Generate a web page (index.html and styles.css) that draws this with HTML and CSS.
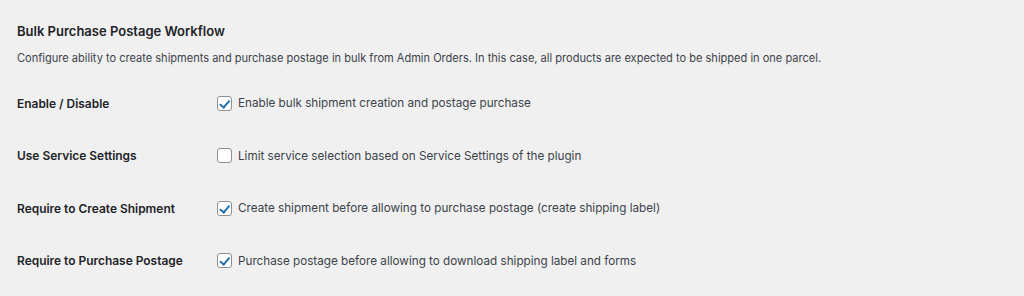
FILE: index.html
```html
<!DOCTYPE html>
<html lang="en">
<head>
    <meta charset="UTF-8">
    <title>Bulk Purchase Postage Workflow</title>
    <link rel="stylesheet" href="styles.css">
</head>
<body>
    <div class="wrap">
        <h2>Bulk Purchase Postage Workflow</h2>
        <p class="description">Configure ability to create shipments and purchase postage in bulk from Admin Orders. In this case, all products are expected to be shipped in one parcel.</p>

        <div class="form-table">
            <div class="row">
                <div class="label">Enable / Disable</div>
                <label class="field"><span class="check on"></span>Enable bulk shipment creation and postage purchase</label>
            </div>
            <div class="row">
                <div class="label">Use Service Settings</div>
                <label class="field"><span class="check"></span>Limit service selection based on Service Settings of the plugin</label>
            </div>
            <div class="row">
                <div class="label">Require to Create Shipment</div>
                <label class="field"><span class="check on"></span>Create shipment before allowing to purchase postage (create shipping label)</label>
            </div>
            <div class="row">
                <div class="label">Require to Purchase Postage</div>
                <label class="field"><span class="check on"></span>Purchase postage before allowing to download shipping label and forms</label>
            </div>
        </div>
    </div>
</body>
</html>
```

FILE: styles.css
```css
body {
    margin: 0;
    background: #f0f0f1;
    font-family: Inter, "Liberation Sans", sans-serif;
    color: #3c434a;
}
.wrap {
    padding: 22px 17px 0 17px;
}
h2 {
    margin: 0;
    font-size: 13px;
    line-height: 18px;
    font-weight: 600;
    color: #1d2327;
}
.description {
    margin: 9px 0 0 0;
    font-size: 11.05px;
    line-height: 18px;
}
.form-table {
    margin-top: 10px;
}
.row {
    display: flex;
    align-items: center;
    height: 52.5px;
}
.label {
    width: 200px;
    font-size: 11.95px;
    font-weight: 600;
    color: #1d2327;
}
.field {
    display: flex;
    align-items: center;
    font-size: 11.7px;
}
.check {
    width: 13px;
    height: 13px;
    border: 1px solid #8c8f94;
    border-radius: 3px;
    background: #fff;
    margin-right: 6px;
    position: relative;
}
.check.on::after {
    content: "";
    position: absolute;
    left: 4px;
    top: 1px;
    width: 3.5px;
    height: 7.5px;
    border: solid #2271b1;
    border-width: 0 2px 2px 0;
    transform: rotate(40deg);
}
```
